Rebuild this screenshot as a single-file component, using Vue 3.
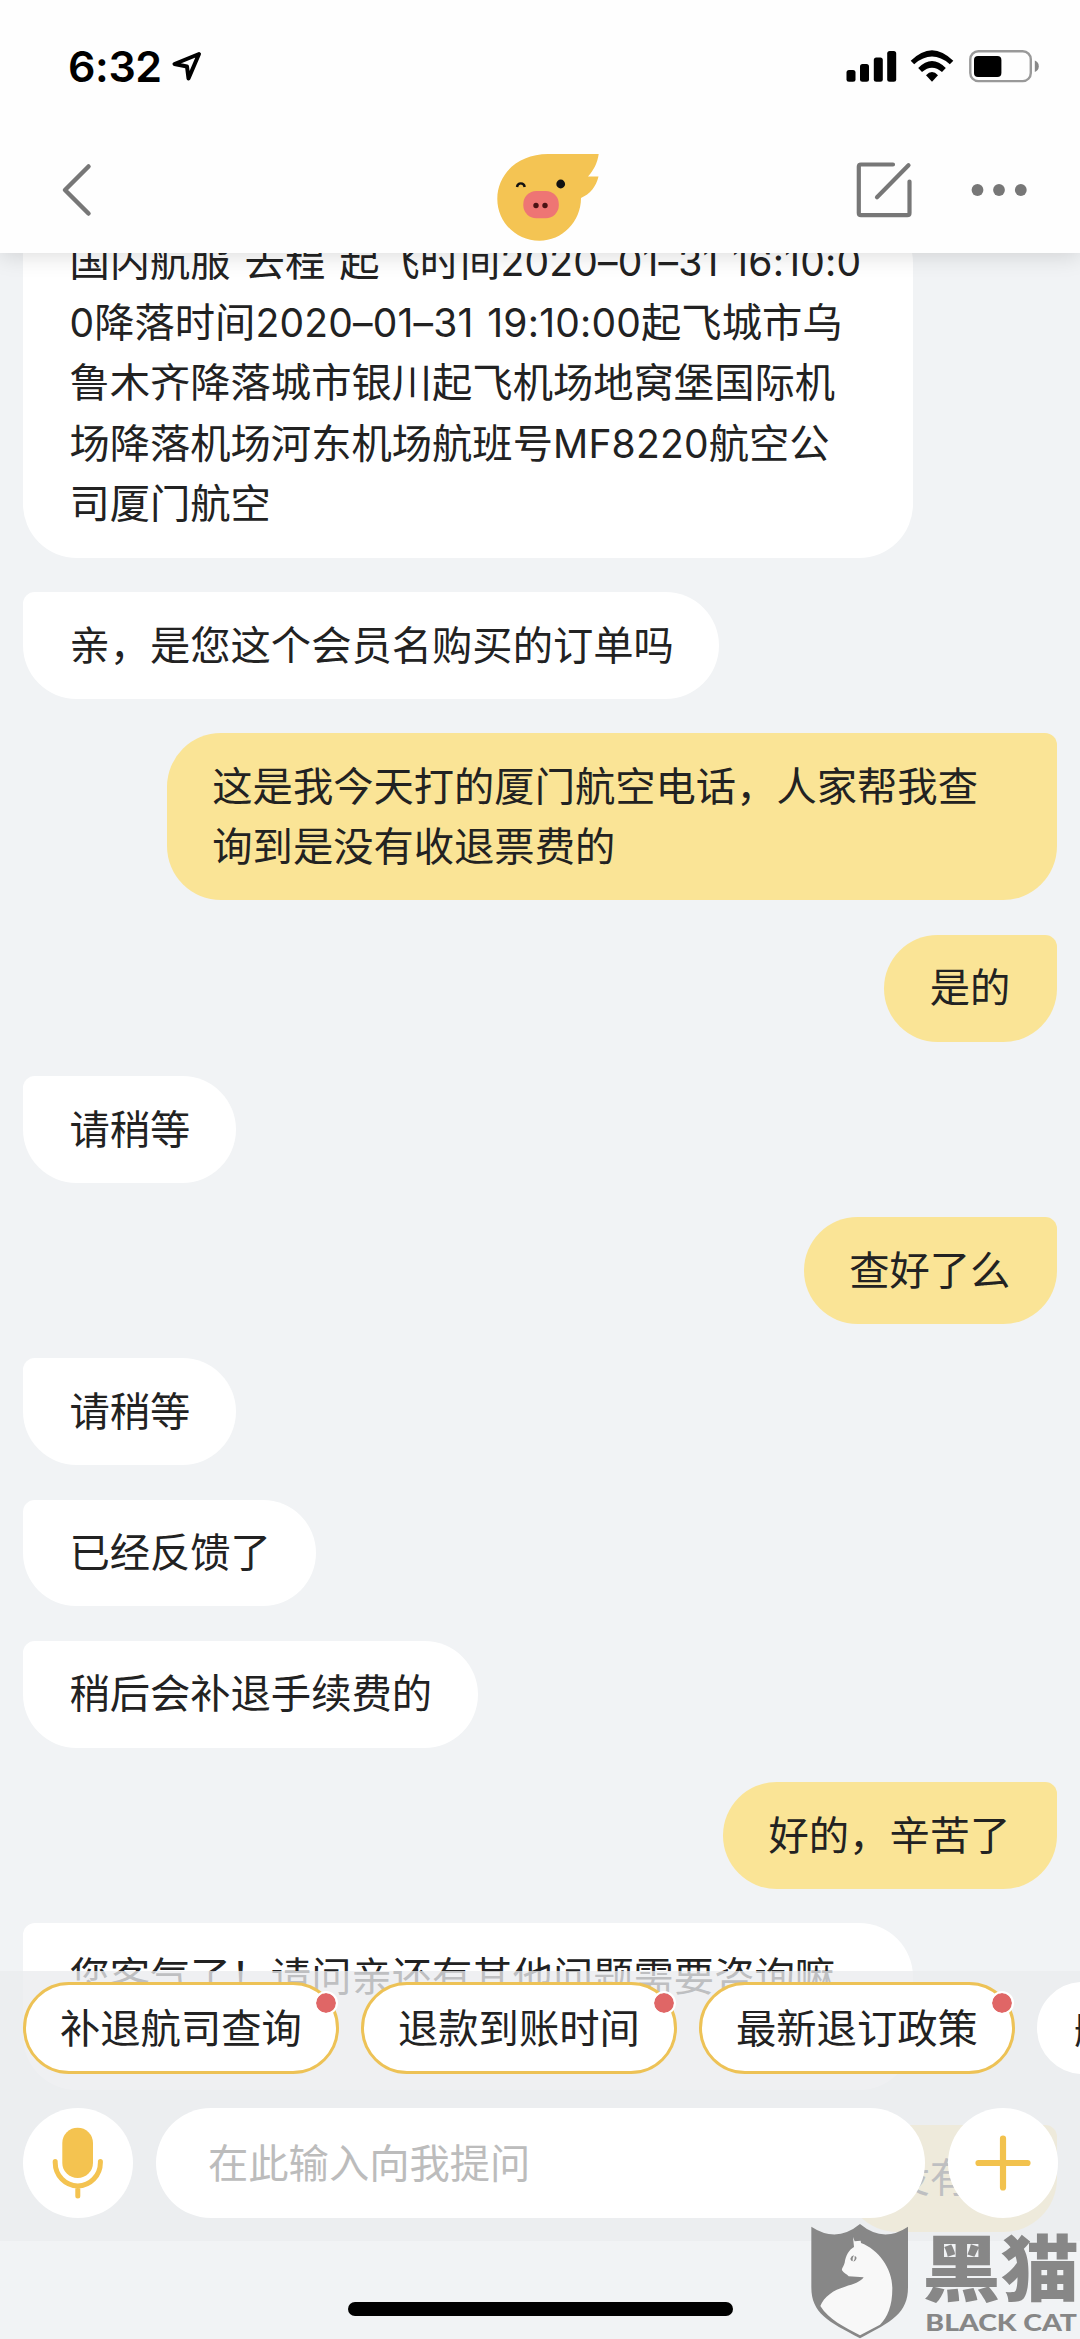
<script setup>
const messages = [
  {
    from: 'agent',
    lines: [
      [{ t: '国内航服 去程 起飞时间' }, { t: '2020–01–31 16:10:0', latin: true }],
      [{ t: '0', latin: true }, { t: '降落时间' }, { t: '2020–01–31 19:10:00', latin: true }, { t: '起飞城市乌' }],
      [{ t: '鲁木齐降落城市银川起飞机场地窝堡国际机' }],
      [{ t: '场降落机场河东机场航班号' }, { t: 'MF8220', latin: true }, { t: '航空公' }],
      [{ t: '司厦门航空' }],
    ],
    wide: true,
  },
  { from: 'agent', lines: [[{ t: '亲，是您这个会员名购买的订单吗' }]] },
  {
    from: 'me',
    lines: [[{ t: '这是我今天打的厦门航空电话，人家帮我查' }], [{ t: '询到是没有收退票费的' }]],
    wide: true,
  },
  { from: 'me', lines: [[{ t: '是的' }]] },
  { from: 'agent', lines: [[{ t: '请稍等' }]] },
  { from: 'me', lines: [[{ t: '查好了么' }]] },
  { from: 'agent', lines: [[{ t: '请稍等' }]] },
  { from: 'agent', lines: [[{ t: '已经反馈了' }]] },
  { from: 'agent', lines: [[{ t: '稍后会补退手续费的' }]] },
  { from: 'me', lines: [[{ t: '好的，辛苦了' }]] },
  { from: 'agent', lines: [[{ t: '您客气了！请问亲还有其他问题需要咨询嘛' }], []], wide: true },
  { from: 'me', lines: [[{ t: '没有了' }]] },
]

const chips = [
  { label: '补退航司查询', hot: true },
  { label: '退款到账时间', hot: true },
  { label: '最新退订政策', hot: true },
  { label: '航班动态', hot: false },
]
</script>

<template>
  <div class="screen">
    <header class="header">
      <div class="status">
        <span class="time">6:32</span>
        <svg class="locate" width="34" height="34" viewBox="170 49 34 34">
          <path d="M199 54 L174.500 64 L187 66.500 L188.500 78.500 Z" fill="none" stroke="#000" stroke-width="4" stroke-linejoin="round" />
        </svg>
        <svg class="signals" width="196" height="36" viewBox="846 48 196 36">
          <rect x="846.500" y="70" width="9" height="11.700" rx="2.500" />
          <rect x="860" y="64" width="9" height="17.700" rx="2.500" />
          <rect x="873.800" y="57.500" width="9" height="24.200" rx="2.500" />
          <rect x="887.200" y="51" width="9" height="30.700" rx="2.500" />
          <path d="M910.700 60.800 Q932 39.500 953.300 60.800 L949.800 64.200 Q932 49 914.200 64.200 Z" />
          <path d="M918.200 68 Q932 54 945.800 68 L942 72 Q932 63.500 922 72 Z" />
          <path d="M926 75.200 Q932 68.800 938 75.200 L932 81.800 Z" />
          <rect x="970.300" y="51.300" width="60.500" height="29.800" rx="8" fill="none" stroke="#999" stroke-width="2.400" />
          <rect x="974" y="56" width="27.400" height="21" rx="4" />
          <path d="M1034.800 60.500 Q1038.800 62 1038.800 66.300 Q1038.800 70.600 1034.800 72 Z" fill="#888" />
        </svg>
      </div>
      <nav class="nav">
        <svg class="back" width="40" height="60" viewBox="57 160 40 60">
          <path d="M88.500 166.500 L65 190 L88.500 213.500" fill="none" stroke="#777" stroke-width="4.500" stroke-linecap="round" stroke-linejoin="round" />
        </svg>
        <svg class="pig" width="102" height="102" viewBox="497 139 102 102">
          <path d="M548 154 H598.700 C597.500 163 593.500 170.500 588 176.500 H598.500 C596 187 590 194 581 198 C581 222 562 240.700 539.500 240.700 C516 240.700 497.300 222 497.300 199 C497.300 173 519 154 548 154 Z" fill="#f4c453" />
          <path d="M517 187 Q517.500 183.400 520.800 183.400 Q524.200 183.400 524.700 187" fill="none" stroke="#111" stroke-width="2.400" />
          <circle cx="560.700" cy="184" r="4.400" fill="#111" />
          <rect x="523.300" y="191" width="35.500" height="27.300" rx="13" fill="#ee7574" />
          <circle cx="536" cy="205.500" r="2.700" fill="#4a1214" />
          <circle cx="545" cy="205.500" r="2.700" fill="#4a1214" />
        </svg>
        <svg class="compose" width="60" height="60" viewBox="855 160 60 60">
          <g fill="none" stroke="#777" stroke-width="4.200" stroke-linecap="round" stroke-linejoin="round">
            <path d="M893 164.500 H861 Q858.800 164.500 858.800 166.700 V213 Q858.800 215.200 861 215.200 H907.300 Q909.500 215.200 909.500 213 V181.500" />
            <path d="M908.500 165.300 L877 197.300" />
          </g>
        </svg>
        <svg class="more" width="60" height="20" viewBox="969 180 60 20">
          <g fill="#777">
            <circle cx="977.500" cy="190" r="5.900" />
            <circle cx="999" cy="190" r="5.900" />
            <circle cx="1020.800" cy="190" r="5.900" />
          </g>
        </svg>
      </nav>
    </header>

    <main class="chat">
      <div class="list">
        <div v-for="(m, i) in messages" :key="i" class="bubble" :class="[m.from, { wide: m.wide }]">
          <div v-for="(line, j) in m.lines" :key="j" class="line"><span v-for="(p, k) in line" :key="k" :class="{ latin: p.latin }">{{ p.t }}</span></div>
        </div>
      </div>
    </main>

    <footer class="bottom">
      <div class="panel">
        <div class="chips">
          <div v-for="c in chips" :key="c.label" class="chip" :class="{ hot: c.hot }">
            {{ c.label }}<i v-if="c.hot" class="dot"></i>
          </div>
        </div>
        <div class="entry">
          <button class="round">
            <svg width="110" height="110" viewBox="0 0 110 110">
              <rect x="39.300" y="19.700" width="30.700" height="50.300" rx="15.300" fill="#f4c350" />
              <path d="M32.200 53.500 V54.500 A22.600 23.400 0 0 0 77.400 54.500 V53.500 M54.800 79 V88" fill="none" stroke="#f4c350" stroke-width="5" stroke-linecap="round" />
            </svg>
          </button>
          <div class="input">在此输入向我提问</div>
          <button class="round">
            <svg width="110" height="110" viewBox="0 0 110 110">
              <path d="M30.500 55 H79.500 M55 30.500 V79.500" fill="none" stroke="#f2c24e" stroke-width="6.200" stroke-linecap="round" />
            </svg>
          </button>
        </div>
      </div>
      <div class="home"></div>
    </footer>

    <svg class="mark" width="300" height="139" viewBox="0 0 900 417">
      <path d="M94 80 Q170 130 240 72 Q310 130 384 80 V262 C384 340 335 365 240 415 C145 365 94 340 94 262 Z" fill="#878787" />
      <path d="M219 111 L224 124 L242 122 L243 129 C295 148 337 205 337 265 C337 320 322 352 300 374 L240 406 C195 382 145 358 121 318 C132 290 160 270 195 260 C222 252 241 246 251 232 L206 229 C201 222 190 219 186 211 C184 205 192 198 194 188 C198 164 207 150 222 141 Z" fill="#f8f8f8" />
      <path d="M211 176 Q214 167 222 166 Q216 174 218 184 Q212 182 211 176 Z M224 168 Q231 170 229 177 Q226 183 220 185 L224 177 Z" fill="#878787" />
      <text class="mark-zh" x="427" y="285" textLength="470" lengthAdjust="spacingAndGlyphs">黑猫</text>
      <text class="mark-en" x="436" y="394" textLength="455" lengthAdjust="spacingAndGlyphs">BLACK CAT</text>
    </svg>
  </div>
</template>

<style>
html,
body {
  margin: 0;
  background: #f1f3f5;
}
</style>

<style scoped>
.screen {
  position: relative;
  display: flex;
  flex-direction: column;
  width: 1080px;
  height: 2339px;
  overflow: hidden;
  background: #f1f3f5;
  color: #222;
  font-family: 'Noto Sans CJK SC', sans-serif;
  font-size: 40.3px;
}
svg {
  display: block;
  flex: none;
}
.header {
  position: relative;
  z-index: 2;
  flex: none;
  height: 253px;
  background: #fefefe;
  box-shadow: 0 2px 22px rgba(0, 0, 0, 0.15);
}
.status {
  display: flex;
  align-items: center;
  box-sizing: border-box;
  height: 127px;
  padding: 5px 38px 0 68px;
}
.time {
  width: 102px;
  color: #000;
  font-family: Inter, sans-serif;
  font-size: 43px;
  font-weight: 600;
  line-height: 50px;
  letter-spacing: -0.4px;
  white-space: nowrap;
}
.signals {
  margin-left: auto;
}
.nav {
  display: flex;
  align-items: center;
  height: 126px;
  padding: 0 51px 0 57px;
}
.pig {
  margin-left: 400px;
}
.compose {
  margin-left: auto;
}
.more {
  margin-left: 54px;
}
.chat {
  flex: 1;
  overflow: hidden;
}
.list {
  display: flex;
  flex-direction: column;
  align-items: flex-start;
  gap: 34.4px;
  margin-top: -44.2px;
  padding: 0 23.3px 0 23px;
}
.bubble {
  box-sizing: border-box;
  flex: none;
  padding: 20.5px 45.6px 25.8px 46.4px;
  line-height: 60.5px;
  white-space: pre;
}
.bubble.wide {
  width: 890px;
}
.agent {
  border-radius: 12px 54px 54px 54px;
  background: #fff;
}
.me {
  align-self: flex-end;
  padding-right: 46.4px;
  padding-left: 45.6px;
  border-radius: 54px 12px 54px 54px;
  background: #fae496;
}
.line {
  height: 60.5px;
  word-spacing: 5px;
}
.latin {
  font-family: Inter, 'Noto Sans CJK SC', sans-serif;
  font-size: 39px;
  font-weight: 400;
  letter-spacing: 0.2px;
  word-spacing: 2.5px;
}
.bottom {
  position: absolute;
  right: 0;
  bottom: 0;
  left: 0;
  height: 368px;
}
.panel {
  box-sizing: border-box;
  height: 270px;
  padding: 11px 0 0 23px;
  overflow: hidden;
  background: rgba(235, 236, 238, 0.78);
}
.chips {
  display: flex;
  gap: 22px;
}
.chip {
  position: relative;
  flex: none;
  box-sizing: border-box;
  width: 316px;
  height: 92px;
  padding-left: 34px;
  border: 3px solid #fff;
  border-radius: 46px;
  background: #fff;
  line-height: 82px;
  white-space: nowrap;
}
.chip.hot {
  border-color: #edc256;
}
.dot {
  position: absolute;
  top: 6px;
  right: -2px;
  width: 20px;
  height: 20px;
  border: 2px solid #fff;
  border-radius: 50%;
  background: #e06666;
  background-clip: padding-box;
}
.entry {
  display: flex;
  gap: 23px;
  margin-top: 34px;
}
.round {
  flex: none;
  width: 110px;
  height: 110px;
  padding: 0;
  border: 0;
  border-radius: 50%;
  background: #fff;
}
.input {
  box-sizing: border-box;
  width: 769px;
  height: 110px;
  padding-left: 52px;
  border-radius: 55px;
  background: #fff;
  color: #bcbcbc;
  line-height: 106px;
}
.home {
  width: 385px;
  height: 14.500px;
  margin: 60.500px auto 0;
  border-radius: 8px;
  background: #000;
}
.mark {
  position: absolute;
  right: 0;
  bottom: 0;
}
.mark-zh {
  fill: #878787;
  font-family: 'Noto Sans CJK SC', sans-serif;
  font-size: 216px;
  font-weight: 900;
}
.mark-en {
  fill: #878787;
  font-family: Lato, 'Liberation Sans', sans-serif;
  font-size: 67px;
  font-weight: 900;
}
</style>
